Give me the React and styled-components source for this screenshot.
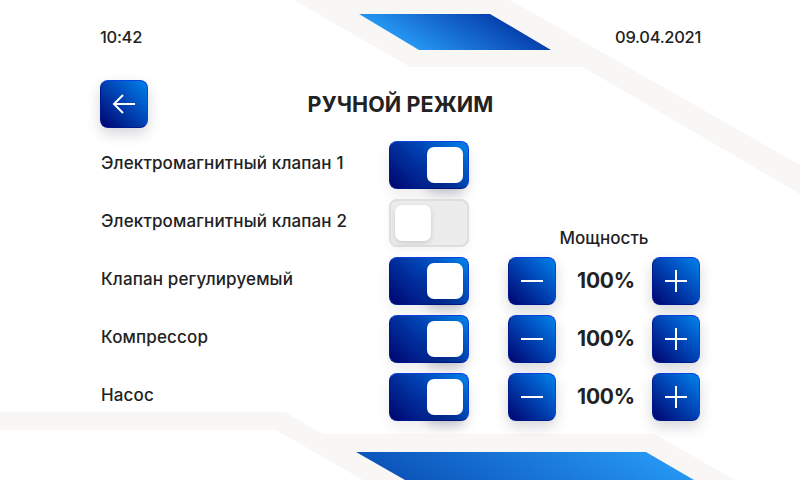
import React from "react";
import styled, { createGlobalStyle } from "styled-components";

const GlobalStyle = createGlobalStyle`
  html, body {
    margin: 0;
    padding: 0;
    background: #fff;
  }
`;

const Screen = styled.div`
  position: relative;
  width: 800px;
  height: 480px;
  overflow: hidden;
  background: #fff;
  color: #222;
  font-family: "Inter", "Noto Sans", sans-serif;
`;

const Backdrop = styled.svg`
  position: absolute;
  inset: 0;
`;

const Content = styled.div`
  position: relative;
  display: flex;
  flex-direction: column;
  padding: 27px 99px 0 100px;
`;

const Header = styled.header`
  display: flex;
  justify-content: space-between;
  align-items: center;
  height: 20px;
  font-size: 16.5px;
  font-weight: 500;
  letter-spacing: -0.3px;
`;

const TitleRow = styled.div`
  position: relative;
  display: flex;
  align-items: center;
  justify-content: center;
  height: 48px;
  margin-top: 33px;
`;

const Title = styled.h1`
  margin: -1px 0 0;
  font-size: 21.5px;
  font-weight: 700;
  letter-spacing: 0.1px;
`;

const SquareButton = styled.button`
  display: flex;
  align-items: center;
  justify-content: center;
  width: 48px;
  height: 48px;
  padding: 0;
  border: 1px solid #0a3fe0;
  border-bottom-color: #001a8c;
  border-left-color: #001a8c;
  border-radius: 8px;
  background: linear-gradient(45deg, #00046e 0%, #0047b8 55%, #0083ea 100%);
  box-shadow: 0 6px 14px rgba(0, 0, 40, 0.16);
`;

const BackButton = styled(SquareButton)`
  position: absolute;
  left: 0;
  top: 0;
`;

const Rows = styled.div`
  display: grid;
  grid-template-columns: 289px 80px 39px 48px 96px 48px;
  grid-auto-rows: 48px;
  row-gap: 10px;
  margin-top: 13px;
  align-items: center;
`;

const Label = styled.div`
  grid-column: 1;
  padding-left: 1px;
  font-size: 17px;
  font-weight: 500;
  letter-spacing: 0.14px;
  white-space: nowrap;
  margin-top: -4px;
`;

const PowerHeading = styled.div`
  grid-column: 4 / 7;
  align-self: end;
  text-align: center;
  font-size: 17px;
  font-weight: 500;
  letter-spacing: 0.05px;
  margin-bottom: -1px;
`;

const Toggle = styled.div`
  grid-column: 2;
  box-sizing: border-box;
  display: flex;
  justify-content: ${(p) => (p.$on ? "flex-end" : "flex-start")};
  width: 80px;
  height: 48px;
  padding: ${(p) => (p.$on ? "5px" : "4px")};
  border: ${(p) => (p.$on ? "1px solid #0a3fe0" : "2px solid #dedede")};
  border-bottom-color: ${(p) => (p.$on ? "#001a8c" : "#dedede")};
  border-left-color: ${(p) => (p.$on ? "#001a8c" : "#dedede")};
  border-radius: 8px;
  background: ${(p) =>
    p.$on
      ? "linear-gradient(45deg, #00046e 0%, #0047b8 60%, #0083ea 100%)"
      : "#ececec"};
  box-shadow: ${(p) =>
    p.$on ? "0 6px 14px rgba(0, 0, 40, 0.08)" : "0 3px 10px rgba(0, 0, 0, 0.05)"};
`;

const Knob = styled.div`
  width: 36px;
  height: 36px;
  border-radius: 7px;
  background: #fff;
  box-shadow: ${(p) =>
    p.$on ? "0 10px 12px rgba(0, 0, 50, 0.22)" : "0 2px 5px rgba(0, 0, 0, 0.14)"};
`;

const Value = styled.div`
  padding-left: 4px;
  margin-top: -1px;
  text-align: center;
  font-size: 21px;
  font-weight: 700;
  letter-spacing: -0.2px;
`;

const Step = styled(SquareButton)`
  grid-column: ${(p) => p.$col};
`;

const ArrowIcon = () => (
  <svg width="24" height="24" viewBox="0 0 24 24" fill="none" stroke="#fff" strokeWidth="2">
    <path d="M2 12H23M11 3L2 12L11 21" />
  </svg>
);

const MinusIcon = () => (
  <svg width="24" height="24" viewBox="0 0 24 24" fill="none" stroke="#fff" strokeWidth="2">
    <path d="M1 12H23" />
  </svg>
);

const PlusIcon = () => (
  <svg width="24" height="24" viewBox="0 0 24 24" fill="none" stroke="#fff" strokeWidth="2">
    <path d="M1 12H23M12 1V23" />
  </svg>
);

const ROWS = [
  { name: "Электромагнитный клапан 1", on: true },
  { name: "Электромагнитный клапан 2", on: false, heading: true },
  { name: "Клапан регулируемый", on: true, power: "100%" },
  { name: "Компрессор", on: true, power: "100%" },
  { name: "Насос", on: true, power: "100%" },
];

export default function App() {
  return (
    <Screen>
      <GlobalStyle />
      <Backdrop width="800" height="480" viewBox="0 0 800 480">
        <defs>
          <linearGradient id="topBlue" gradientUnits="userSpaceOnUse" x1="419" y1="50" x2="453" y2="-8">
            <stop offset="0" stopColor="#2596f2" />
            <stop offset="1" stopColor="#0741ae" />
          </linearGradient>
          <linearGradient id="bottomBlue" gradientUnits="userSpaceOnUse" x1="356" y1="452" x2="427" y2="327">
            <stop offset="0" stopColor="#0c55bb" />
            <stop offset="1" stopColor="#2596f2" />
          </linearGradient>
        </defs>
        <path fill="#f8f7f5" d="M294 0H510L800 165V194L583 67H410Z" />
        <path fill="#f8f7f5" d="M0 412H285L323 434H654L735 480H363L276 430H0Z" />
        <path fill="url(#topBlue)" d="M359 14H490L551 50H419Z" />
        <path fill="url(#bottomBlue)" d="M356 452H646L694 480H405Z" />
      </Backdrop>
      <Content>
        <Header>
          <span>10:42</span>
          <span>09.04.2021</span>
        </Header>
        <TitleRow>
          <BackButton>
            <ArrowIcon />
          </BackButton>
          <Title>РУЧНОЙ РЕЖИМ</Title>
        </TitleRow>
        <Rows>
          {ROWS.map((row) => (
            <React.Fragment key={row.name}>
              <Label>{row.name}</Label>
              <Toggle $on={row.on}>
                <Knob $on={row.on} />
              </Toggle>
              {row.heading && <PowerHeading>Мощность</PowerHeading>}
              {row.power && (
                <>
                  <Step $col={4}>
                    <MinusIcon />
                  </Step>
                  <Value>{row.power}</Value>
                  <Step $col={6}>
                    <PlusIcon />
                  </Step>
                </>
              )}
            </React.Fragment>
          ))}
        </Rows>
      </Content>
    </Screen>
  );
}
